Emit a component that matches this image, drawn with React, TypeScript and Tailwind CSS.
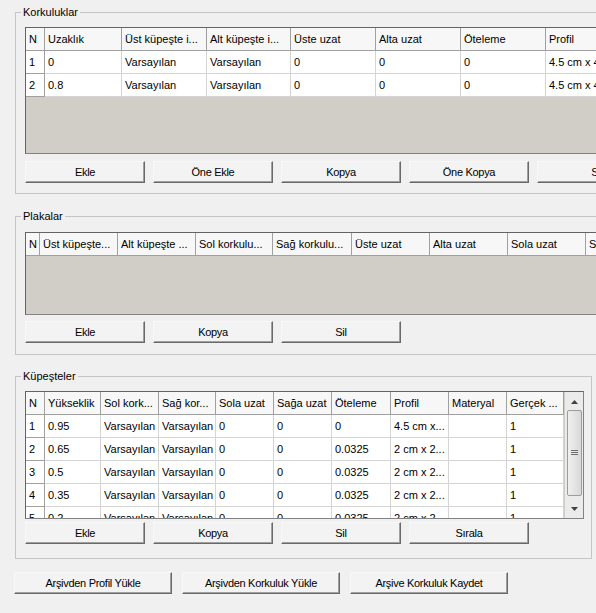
import type { ReactNode } from 'react';

type Col = { label: string; w: number };

const korkulukCols: Col[] = [
  { label: 'N', w: 19 },
  { label: 'Uzaklık', w: 77 },
  { label: 'Üst küpeşte i...', w: 85 },
  { label: 'Alt küpeşte i...', w: 84 },
  { label: 'Üste uzat', w: 85 },
  { label: 'Alta uzat', w: 85 },
  { label: 'Öteleme', w: 85 },
  { label: 'Profil', w: 85 },
];

const korkulukRows = [
  ['1', '0', 'Varsayılan', 'Varsayılan', '0', '0', '0', '4.5 cm x 4.5 cm'],
  ['2', '0.8', 'Varsayılan', 'Varsayılan', '0', '0', '0', '4.5 cm x 4.5 cm'],
];

const plakaCols: Col[] = [
  { label: 'N', w: 14 },
  { label: 'Üst küpeşte...', w: 78 },
  { label: 'Alt küpeşte ...', w: 78 },
  { label: 'Sol korkulu...', w: 77 },
  { label: 'Sağ korkulu...', w: 79 },
  { label: 'Üste uzat', w: 78 },
  { label: 'Alta uzat', w: 78 },
  { label: 'Sola uzat', w: 78 },
  { label: 'Sağa uzat', w: 78 },
];

const kupesteCols: Col[] = [
  { label: 'N', w: 19 },
  { label: 'Yükseklik', w: 56 },
  { label: 'Sol kork...', w: 58 },
  { label: 'Sağ kor...', w: 57 },
  { label: 'Sola uzat', w: 58 },
  { label: 'Sağa uzat', w: 58 },
  { label: 'Öteleme', w: 59 },
  { label: 'Profil', w: 58 },
  { label: 'Materyal', w: 58 },
  { label: 'Gerçek ...', w: 57 },
];

const kupesteRows = [
  ['1', '0.95', 'Varsayılan', 'Varsayılan', '0', '0', '0', '4.5 cm x...', '', '1'],
  ['2', '0.65', 'Varsayılan', 'Varsayılan', '0', '0', '0.0325', '2 cm x 2...', '', '1'],
  ['3', '0.5', 'Varsayılan', 'Varsayılan', '0', '0', '0.0325', '2 cm x 2...', '', '1'],
  ['4', '0.35', 'Varsayılan', 'Varsayılan', '0', '0', '0.0325', '2 cm x 2...', '', '1'],
  ['5', '0.2', 'Varsayılan', 'Varsayılan', '0', '0', '0.0325', '2 cm x 2...', '', '1'],
];

function Grid({
  cols,
  rows,
  width,
  height,
  scroll,
}: {
  cols: Col[];
  rows: string[][];
  width: number;
  height: number;
  scroll?: boolean;
}) {
  return (
    <div
      className="flex shrink-0 overflow-hidden border border-[#828282] border-t-[#646464] border-l-[#646464] bg-[#d0cec7]"
      style={{ width, height }}
    >
      <div className="min-w-0 flex-1 overflow-hidden">
        <div className="flex">
          {cols.map((c, i) => (
            <div
              key={i}
              className="flex h-[23px] shrink-0 items-center overflow-hidden whitespace-nowrap border-r border-b border-[#a0a0a0] bg-[#f7f7f7] pl-[3px]"
              style={{ width: c.w }}
            >
              {c.label}
            </div>
          ))}
        </div>
        {rows.map((r, ri) => (
          <div key={ri} className="flex">
            {r.map((v, ci) => (
              <div
                key={ci}
                className={`flex h-[23px] shrink-0 items-center overflow-hidden whitespace-nowrap border-r border-b bg-white pl-[3px] ${
                  ci === 0 ? 'border-[#a0a0a0]' : 'border-[#d4d4d4]'
                }`}
                style={{ width: cols[ci].w }}
              >
                {v}
              </div>
            ))}
          </div>
        ))}
      </div>
      {scroll && <ScrollBar />}
    </div>
  );
}

function ScrollBar() {
  return (
    <div className="flex w-[18px] shrink-0 flex-col items-center bg-[#ebebeb] py-[1px]">
      <div className="flex h-[17px] w-full items-center justify-center">
        <svg width="7" height="4" viewBox="0 0 7 4">
          <path d="M3.5 0L7 4H0z" fill="#404040" />
        </svg>
      </div>
      <div className="flex h-[86px] w-[15px] items-center justify-center rounded-[2px] border border-[#9c9c9c] bg-gradient-to-r from-[#f0f0f0] to-[#d8d8d8]">
        <svg width="7" height="6" viewBox="0 0 7 6">
          <path d="M0 0.5H7M0 2.5H7M0 4.5H7" stroke="#707070" />
        </svg>
      </div>
      <div className="flex-1" />
      <div className="flex h-[17px] w-full items-center justify-center">
        <svg width="7" height="4" viewBox="0 0 7 4">
          <path d="M0 0H7L3.5 4z" fill="#404040" />
        </svg>
      </div>
    </div>
  );
}

function Btn({ children, w = 120 }: { children: ReactNode; w?: number }) {
  return (
    <button
      className="flex h-[22px] shrink-0 items-center justify-center border border-[#f8f8f8] border-r-[#696969] border-b-[#696969] bg-[#f3f3f3] tracking-[-0.3px] shadow-[inset_-1px_-1px_0_#a0a0a0]"
      style={{ width: w }}
    >
      {children}
    </button>
  );
}

function Group({
  title,
  children,
  className,
}: {
  title: string;
  children: ReactNode;
  className: string;
}) {
  return (
    <div className={`relative border border-[#c4c4c4] pl-[9px] ${className}`}>
      <span className="absolute -top-[7px] left-[5px] bg-[#f0f0f0] px-[2px] leading-[13px]">
        {title}
      </span>
      {children}
    </div>
  );
}

export default function App() {
  return (
    <div className="h-[613px] w-[596px] overflow-hidden bg-[#f0f0f0] text-[11px] text-black [font-family:'Liberation_Sans',Arial,sans-serif]">
      <div className="flex flex-col pt-[12px] pl-[15px]">
        <Group title="Korkuluklar" className="w-[620px] pt-[14px] pb-[10px]">
          <Grid cols={korkulukCols} rows={korkulukRows} width={620} height={127} />
          <div className="mt-[7px] flex gap-[8px]">
            <Btn>Ekle</Btn>
            <Btn>Öne Ekle</Btn>
            <Btn>Kopya</Btn>
            <Btn>Öne Kopya</Btn>
            <Btn>Sil</Btn>
          </div>
        </Group>

        <Group title="Plakalar" className="mt-[22px] w-[620px] pt-[15px] pb-[11px]">
          <Grid cols={plakaCols} rows={[]} width={620} height={83} />
          <div className="mt-[6px] flex gap-[8px]">
            <Btn>Ekle</Btn>
            <Btn>Kopya</Btn>
            <Btn>Sil</Btn>
          </div>
        </Group>

        <Group title="Küpeşteler" className="mt-[21px] w-[577px] pt-[14px] pb-[14px]">
          <Grid cols={kupesteCols} rows={kupesteRows} width={559} height={128} scroll />
          <div className="mt-[3px] flex gap-[8px]">
            <Btn>Ekle</Btn>
            <Btn>Kopya</Btn>
            <Btn>Sil</Btn>
            <Btn>Sırala</Btn>
          </div>
        </Group>
      </div>
      <div className="mt-[13px] flex gap-[10px] pl-[14px]">
        <Btn w={158}>Arşivden Profil Yükle</Btn>
        <Btn w={158}>Arşivden Korkuluk Yükle</Btn>
        <Btn w={158}>Arşive Korkuluk Kaydet</Btn>
      </div>
    </div>
  );
}
